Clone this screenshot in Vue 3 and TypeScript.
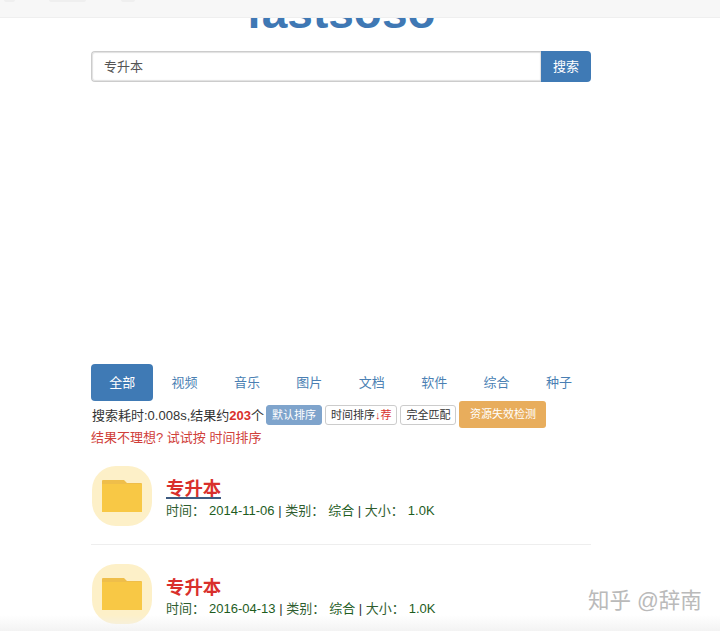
<template>
  <div class="page">
    <div class="top-bar"><i class="bar-mark m1"></i><i class="bar-mark m2"></i><i class="bar-mark m3"></i></div>
    <main class="content">
      <div class="logo-clip"><span class="logo">fastsoso</span></div>
      <form class="search" @submit.prevent>
        <input class="search-input" value="专升本" />
        <button class="search-btn">搜索</button>
      </form>
      <div class="ad-space"></div>
      <ul class="tabs">
        <li v-for="(tab, i) in tabs" :key="tab" class="tab" :class="{ active: i === 0 }">{{ tab }}</li>
      </ul>
      <div class="stats">
        <span class="stats-text">搜索耗时:0.008s,结果约<b class="count">203</b>个</span>
        <span class="btn-sort current">默认排序</span>
        <span class="btn-sort">时间排序<span class="rec"><i>↓</i>荐</span></span>
        <span class="btn-sort">完全匹配</span>
        <span class="btn-check">资源失效检测</span>
      </div>
      <p class="hint">结果不理想? 试试按 时间排序</p>
      <div v-for="(row, i) in results" :key="row.date" class="result" :class="{ first: i === 0 }">
        <div class="file-icon">
          <svg width="40" height="32" viewBox="0 0 40 32">
            <path d="M0 1q0-1 1-1h21l3 3h14q1 0 1 1v4H0z" fill="#efbe4a" />
            <path d="M0 4h39q1 0 1 1v27H0z" fill="#f8c845" />
          </svg>
        </div>
        <div class="info">
          <a class="title" :class="{ hover: i === 0 }">专升本</a>
          <div class="meta">
            <span class="label">时间：</span><span class="val">{{ row.date }}</span> |
            <span class="label">类别：</span><span class="val">综合</span> |
            <span class="label">大小：</span><span class="val">1.0K</span>
          </div>
        </div>
      </div>
    </main>
    <div class="bottom-fade"></div>
    <div class="watermark">知乎 @辞南</div>
  </div>
</template>

<script setup lang="ts">
const tabs = ['全部', '视频', '音乐', '图片', '文档', '软件', '综合', '种子']
const results = [{ date: '2014-11-06' }, { date: '2016-04-13' }]
</script>

<style>
html, body { margin: 0; background: #fff; overflow: hidden; }
</style>

<style scoped>
.page {
  position: relative;
  width: 720px;
  height: 631px;
  overflow: hidden;
  font-family: "Liberation Sans", "Noto Sans CJK SC", sans-serif;
  color: #333;
}
.top-bar {
  height: 17px;
  background: #f7f7f7;
  border-bottom: 1px solid #efefef;
  position: relative;
}
/* cut-off toolbar labels, only a few faint pixels of them show */
.bar-mark {
  position: absolute;
  top: 0;
  height: 2px;
  background: #efefef;
  border-radius: 0 0 3px 3px;
}
.m1 { left: 4px; width: 11px; }
.m2 { left: 49px; width: 37px; }
.m3 { left: 121px; width: 14px; }
.content {
  width: 500px;
  margin-left: 91px;
}
.logo-clip {
  height: 16px;
  overflow: hidden;
  display: flex;
  justify-content: center;
  align-items: flex-end;
}
.logo {
  font-size: 46px;
  line-height: 46px;
  font-weight: bold;
  color: #3f78b4;
  flex: none;
  margin-bottom: -1px;
}
.search {
  display: flex;
  margin-top: 17px;
  height: 31px;
}
.search-input {
  flex: 1;
  min-width: 0;
  box-sizing: border-box;
  border: 1px solid #ccc;
  border-right: none;
  border-radius: 4px 0 0 4px;
  padding: 0 12px 2px 12px;
  font: 13px "Liberation Sans", "Noto Sans CJK SC", sans-serif;
  color: #555;
  box-shadow: inset 0 0 1px 1px #e0e0e0;
  outline: none;
}
.search-btn {
  width: 50px;
  border: none;
  background: #3f7ab5;
  color: #fff;
  border-radius: 0 4px 4px 0;
  font: 13px "Liberation Sans", "Noto Sans CJK SC", sans-serif;
  padding: 0 0 2px;
}
.ad-space {
  height: 282px;
}
.tabs {
  display: flex;
  list-style: none;
  margin: 0;
  padding: 0;
  height: 37px;
}
.tab {
  width: 62.4px;
  flex: none;
  text-align: center;
  line-height: 37px;
  font-size: 13px;
  color: #4a7fb3;
  border-radius: 4px;
}
.tab.active {
  background: #3f7ab5;
  color: #fff;
}
.stats {
  display: flex;
  align-items: center;
  height: 27px;
  padding-left: 1px;
  padding-bottom: 1px;
}
.stats-text {
  font-size: 13px;
  color: #333;
  margin-right: 2px;
  white-space: nowrap;
}
.count {
  color: #d9302c;
}
.btn-sort {
  box-sizing: border-box;
  height: 20px;
  line-height: 18px;
  font-size: 11px;
  color: #333;
  background: #fff;
  border: 1px solid #ccc;
  border-radius: 3px;
  padding: 0 5px;
  margin-right: 3px;
  white-space: nowrap;
}
.btn-sort.current {
  background: #7fa4cc;
  border-color: #7fa4cc;
  color: #fff;
}
.rec {
  color: #d9302c;
}
.rec i {
  font-style: normal;
}
.btn-check {
  box-sizing: border-box;
  height: 27px;
  line-height: 27px;
  font-size: 11px;
  color: #fff;
  background: #e8ad5c;
  border-radius: 3px;
  padding: 0 10.5px;
  white-space: nowrap;
}
.hint {
  margin: 0;
  height: 18px;
  line-height: 18px;
  font-size: 13px;
  color: #d0403a;
}
.result {
  display: flex;
  align-items: center;
  height: 60px;
  padding: 19px 0;
}
.result.first {
  padding-bottom: 18px;
  border-bottom: 1px solid #eee;
}
.file-icon {
  width: 60px;
  height: 60px;
  flex: none;
  margin-left: 1px;
  border-radius: 24px;
  background: #fdf0c8;
  display: flex;
  align-items: center;
  justify-content: center;
}
.info {
  margin-left: 14px;
  padding-top: 7px;
}
.title {
  display: inline-block;
  font-size: 18.4px;
  line-height: 22px;
  font-weight: bold;
  color: #d9302c;
}
.title.hover {
  height: 18px;
  line-height: 20px;
  margin-bottom: 2px;
  border-bottom: 2px solid #3d5a80;
}
.meta {
  font-size: 13px;
  line-height: 20px;
  color: #333;
  white-space: nowrap;
}
.label {
  color: #2f5d2f;
  margin-right: 4px;
}
.val {
  color: #1e5c1e;
}
.bottom-fade {
  position: absolute;
  left: 0;
  right: 0;
  bottom: 0;
  height: 16px;
  background: linear-gradient(to bottom, rgba(240, 240, 240, 0), rgba(240, 240, 240, 0.8));
}
.watermark {
  position: absolute;
  left: 588px;
  top: 588px;
  font-size: 21.5px;
  line-height: 26px;
  color: #bababa;
  white-space: nowrap;
}
</style>
